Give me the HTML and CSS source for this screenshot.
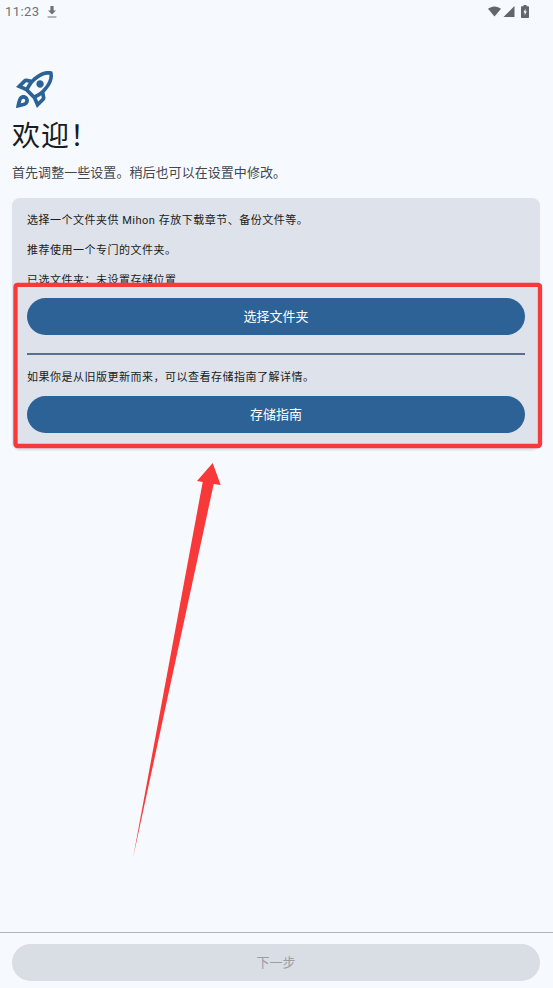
FILE: index.html
```html
<!DOCTYPE html>
<html lang="zh-CN">
<head>
    <meta charset="UTF-8">
    <meta name="viewport" content="width=device-width, initial-scale=1.0">
    <title>Mihon</title>
    <link rel="stylesheet" href="styles.css">
</head>
<body>
    <div class="page">
        <div class="status-bar">
            <div class="status-left">
                <span class="time">11:23</span>
                <svg class="status-download" viewBox="0 0 10 12"><path d="M3.400 0h3.200v4.400H9L5 8.600 1 4.400h2.400zM.6 10.400h8.800v1.200H.6z"/></svg>
            </div>
            <div class="status-right">
                <svg class="status-wifi" viewBox="0 0 14 11"><path d="M0 2.600C1.900 1 4.300 0 7 0s5.100 1 7 2.600L7 11z"/></svg>
                <svg class="status-signal" viewBox="0 0 11 11"><path d="M11 0v11H0z"/></svg>
                <svg class="status-battery" viewBox="0 0 8 13"><path fill-rule="evenodd" d="M2.500 0h3v1.200H7c.6 0 1 .4 1 1V12c0 .6-.4 1-1 1H1c-.6 0-1-.4-1-1V2.200c0-.6.4-1 1-1h1.500zM4.600 3.500 2.400 7.600h1.300V10.500L5.800 6.300H4.500z"/></svg>
            </div>
        </div>

        <main class="content">
            <svg class="rocket" viewBox="2 2 20 20"><path d="M6 15c-.83 0-1.580.34-2.120.88C2.700 17.060 2 22 2 22s4.940-.7 6.120-1.880c.54-.54.88-1.290.88-2.120 0-1.660-1.340-3-3-3zm.71 3.710c-.28.28-2.170.76-2.170.76s.47-1.880.76-2.170c.17-.19.42-.3.7-.3.55 0 1 .45 1 1 0 .28-.11.53-.29.71zm10.710-5.060c6.360-6.360 4.240-11.310 4.240-11.310S16.710.22 10.350 6.580l-2.490-.5c-.65-.13-1.330.08-1.810.55L2 10.690l5 2.140L11.170 17l2.140 5 4.050-4.050c.47-.47.68-1.150.55-1.810l-.49-2.490zM7.410 10.830l-1.910-.82 1.970-1.970 1.440.29c-.57.83-1.030 1.700-1.500 2.500zm6.580 7.670l-.82-1.910c.8-.47 1.670-.93 2.500-1.500l.29 1.440-1.970 1.970zM16 12.240c-1.320 1.320-3.380 2.400-4.040 2.730l-2.930-2.930c.32-.65 1.400-2.710 2.730-4.040 4.680-4.680 8.230-3.910 8.230-3.910s.77 3.550-3.990 8.150zM15 11c1.100 0 2-.9 2-2s-.9-2-2-2-2 .9-2 2 .9 2 2 2z"/></svg>
            <h1 class="title">欢迎！</h1>
            <p class="subtitle">首先调整一些设置。稍后也可以在设置中修改。</p>

            <section class="card">
                <p class="card-text">选择一个文件夹供 Mihon 存放下载章节、备份文件等。</p>
                <p class="card-text">推荐使用一个专门的文件夹。</p>
                <p class="card-text">已选文件夹：未设置存储位置</p>
                <button class="btn">选择文件夹</button>
                <hr class="divider">
                <p class="card-text">如果你是从旧版更新而来，可以查看存储指南了解详情。</p>
                <button class="btn">存储指南</button>
            </section>
        </main>

        <footer class="footer">
            <button class="btn-next" disabled>下一步</button>
        </footer>

        <!-- red annotation drawn on top of the screenshot -->
        <svg class="annotation" viewBox="0 0 553 988">
            <rect x="15.500" y="284.800" width="524.500" height="161.200" rx="2" fill="none" stroke="#f73939" stroke-width="4.300"/>
            <polygon fill="#f73939" points="212.700,463 197,481 202.700,482 133,858 213.700,484 220.700,485"/>
        </svg>
    </div>
</body>
</html>
```

FILE: styles.css
```css
* {
    box-sizing: border-box;
}
body {
    margin: 0;
    background-color: #f6faff;
    font-family: Roboto, "Noto Sans CJK SC", sans-serif;
}
p {
    margin: 0;
}
.page {
    position: relative;
    display: flex;
    flex-direction: column;
    height: 988px;
    overflow: hidden;
}
.status-bar {
    display: flex;
    justify-content: space-between;
    align-items: center;
    height: 23px;
    padding: 0 24px 0 5px;
    color: #6f7276;
}
.status-left,
.status-right {
    display: flex;
    align-items: center;
}
.time {
    font-size: 13px;
    letter-spacing: 0.4px;
}
.status-download {
    width: 10px;
    height: 12px;
    margin-left: 8px;
    fill: #6f7276;
}
.status-wifi {
    width: 13px;
    height: 11px;
    fill: #62666a;
}
.status-signal {
    width: 12px;
    height: 11px;
    margin-left: 2px;
    fill: #62666a;
}
.status-battery {
    width: 8px;
    height: 13px;
    margin-left: 6px;
    fill: #62666a;
}
.content {
    flex: 1;
    padding: 47.500px 13px 0 12px;
}
.rocket {
    display: block;
    width: 37px;
    height: 37px;
    margin-left: 3.500px;
    fill: #2d6297;
}
.title {
    margin: 11.500px 0 0;
    font-size: 28px;
    font-weight: 400;
    line-height: 36px;
    letter-spacing: 1px;
    color: #191c20;
}
.subtitle {
    margin-top: 8px;
    font-size: 13px;
    line-height: 20px;
    letter-spacing: 0.05px;
    color: #43474e;
}
.card {
    display: flex;
    flex-direction: column;
    margin-top: 14.500px;
    padding: 15px 15px 17px;
    border-radius: 8px;
    background-color: #dee2eb;
    box-shadow: 0 1px 2px rgba(0, 0, 0, 0.06);
}
.card-text {
    font-size: 11px;
    line-height: 16px;
    letter-spacing: 0.5px;
    color: #191c20;
}
.card-text + .card-text {
    margin-top: 14px;
}
.btn {
    height: 37.400px;
    margin-top: 9.500px;
    padding: 0 0 2px;
    border: none;
    border-radius: 19px;
    background-color: #2d6297;
    color: #fff;
    font-family: inherit;
    font-size: 13px;
}
.divider {
    width: 100%;
    height: 2px;
    margin: 18px 0 15px;
    border: none;
    background-color: #5b6f8c;
}
.footer {
    padding: 11px 13px 7px 12px;
    border-top: 1px solid #b1b5ba;
}
.btn-next {
    display: block;
    width: 100%;
    height: 37px;
    padding: 0 0 2px;
    border: none;
    border-radius: 19px;
    background-color: #d9dde4;
    color: #9a9ea5;
    font-family: inherit;
    font-size: 13px;
}
.annotation {
    position: absolute;
    top: 0;
    left: 0;
    width: 553px;
    height: 988px;
}
```
